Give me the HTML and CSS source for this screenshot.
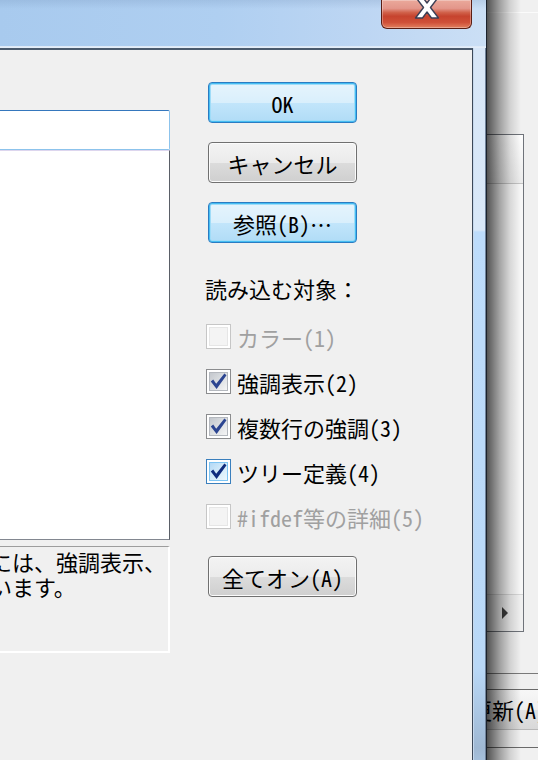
FILE: index.html
```html
<!DOCTYPE html>
<html lang="ja">
<head>
<meta charset="utf-8">
<title>読み込む対象</title>
<link rel="stylesheet" href="styles.css">
</head>
<body>
<div class="stage">
  <div class="dialog">
    <div class="titlebar">
      <div class="close">
        <svg class="close-x" width="26" height="23" viewBox="0 0 26 23">
          <path d="M1.5 1h7l4.5 6 4.5-6h7l-8 10.5 8 10.5h-7L13 16l-4.5 6h-7l8-10.5z" fill="#fff" stroke="#3b3f55" stroke-width="1.4" stroke-linejoin="round"/>
        </svg>
      </div>
    </div>
    <div class="dlg-body">
      <div class="client">
        <div class="col-left">
          <div class="edit"></div>
          <div class="listbox"></div>
          <div class="note"><div class="note-line">には、強調表示、</div><div class="note-line">います。</div></div>
        </div>
        <div class="col-right">
          <button class="btn btn-default">OK</button>
          <button class="btn">キャンセル</button>
          <button class="btn btn-default">参照(B)…</button>
          <div class="group-label">読み込む対象：</div>
          <ul class="checks">
            <li class="chk disabled"><span class="cb"><span class="cb-in"></span></span>カラー(1)</li>
            <li class="chk"><span class="cb"><span class="cb-in"><svg width="17" height="17" viewBox="0 0 17 17"><path d="M0.8 8.6L3.2 6.6L6.2 10.8L14.4 0.6L16.5 2.2L6.6 16Z" fill="#2c4591"/></svg></span></span>強調表示(2)</li>
            <li class="chk"><span class="cb"><span class="cb-in"><svg width="17" height="17" viewBox="0 0 17 17"><path d="M0.8 8.6L3.2 6.6L6.2 10.8L14.4 0.6L16.5 2.2L6.6 16Z" fill="#2c4591"/></svg></span></span>複数行の強調(3)</li>
            <li class="chk hot"><span class="cb"><span class="cb-in"><svg width="17" height="17" viewBox="0 0 17 17"><path d="M0.8 8.6L3.2 6.6L6.2 10.8L14.4 0.6L16.5 2.2L6.6 16Z" fill="#0f2c7e"/></svg></span></span>ツリー定義(4)</li>
            <li class="chk disabled"><span class="cb"><span class="cb-in"></span></span>#ifdef等の詳細(5)</li>
          </ul>
          <button class="btn btn-all">全てオン(A)</button>
        </div>
      </div>
      <div class="frame"></div>
    </div>
  </div>
  <div class="bw">
    <div class="bw-top"></div>
    <div class="bw-box">
      <div class="bw-head"></div>
      <div class="bw-arrow"><span class="tri"></span></div>
    </div>
    <div class="bw-bar"></div>
    <div class="bw-btn">更新(A)</div>
    <div class="bw-bottom"></div>
    <div class="bw-shadow"></div>
  </div>
</div>
</body>
</html>
```
FILE: styles.css
```css
html, body {
  margin: 0;
  padding: 0;
  background: #f0f0f0;
}
body {
  font-family: "Noto Sans CJK JP", "Noto Sans", sans-serif;
  font-size: 22px;
  font-feature-settings: "hwid" 1;
  color: #000;
}
.stage {
  width: 538px;
  height: 760px;
  overflow: hidden;
  display: flex;
}
.dialog {
  width: 487px;
  flex-shrink: 0;
  box-sizing: border-box;
  border-right: 1px solid #1b222c;
  display: flex;
  flex-direction: column;
}
.titlebar {
  height: 48px;
  flex-shrink: 0;
  box-sizing: border-box;
  padding-right: 14px;
  display: flex;
  justify-content: flex-end;
  background:
    linear-gradient(to bottom, rgba(110,140,180,.22) 0, rgba(110,140,180,0) 9px, rgba(0,0,0,0) 46px, #dbe8f7 46px, #e6eff9 48px),
    linear-gradient(to right, #a8caee 0%, #afcff1 45%, #bdd6f3 75%, #cbdff5 100%);
}
.close {
  width: 91px;
  height: 29px;
  box-sizing: border-box;
  border: 1px solid #5a1e14;
  border-top: none;
  border-radius: 0 0 6px 6px;
  background: linear-gradient(#eaa99b 0%, #e3968a 30%, #d06049 45%, #c6432e 58%, #cf5038 80%, #e2805f 100%);
  box-shadow: inset 0 0 0 1px rgba(255,255,255,.3);
  display: flex;
  justify-content: center;
  align-items: flex-start;
}
.close-x {
  margin-top: -4px;
}
.dlg-body {
  flex: 1;
  display: flex;
}
.client {
  width: 473px;
  flex-shrink: 0;
  box-sizing: border-box;
  border-top: 2px solid #4a5a6d;
  border-right: 1px solid #3c4858;
  display: flex;
  background: #f0f0f0;
}
.frame {
  flex: 1;
  background: linear-gradient(to bottom, #d7e6f7 0, #d9e8f8 182px, #bddcfb 184px, #b9d8f7 620px, #9fb8d3 700px, #b7d4f2 745px);
  box-shadow: inset -1px 0 #71839a, inset 1px 0 #c6d8ec;
}
.col-left {
  width: 180px;
  margin-left: -10px;
  flex-shrink: 0;
  display: flex;
  flex-direction: column;
}
.edit {
  margin-top: 60px;
  height: 40px;
  box-sizing: border-box;
  border: 1px solid #8cc3ec;
  border-top-color: #3577bd;
  border-radius: 2px;
  background: #fff;
}
.listbox {
  height: 390px;
  box-sizing: border-box;
  border: 1px solid #828790;
  border-top-color: #ddd6ee;
  border-right-color: #5a5f67;
  background: #fff;
}
.note {
  margin-top: 6px;
  height: 107px;
  box-sizing: border-box;
  border-top: 1px solid #9d9d9d;
  border-right: 2px solid #fff;
  border-bottom: 2px solid #fff;
  padding-top: 2px;
  white-space: nowrap;
}
.note-line {
  height: 25px;
  line-height: 25px;
}
.col-right {
  margin-left: 35px;
  display: flex;
  flex-direction: column;
  align-items: flex-start;
}
.btn {
  width: 149px;
  height: 41px;
  margin: 19px 0 0 3px;
  padding: 0;
  box-sizing: border-box;
  display: flex;
  align-items: center;
  justify-content: center;
  font: inherit;
  font-feature-settings: "hwid" 1;
  line-height: 1;
  color: #000;
  border: 1px solid #707070;
  border-radius: 4px;
  background: linear-gradient(#f3f3f3 0%, #ebebeb 50%, #dcdcdc 51%, #cfcfcf 100%);
  box-shadow: inset 0 0 0 1px #fbfbfb;
}
.btn:first-child {
  margin-top: 32px;
}
.btn-default {
  border-color: #2a7cc2;
  background: linear-gradient(#e6f4fc 0%, #d9effc 50%, #c2e5fb 51%, #b0dcf6 100%);
  box-shadow: inset 0 0 0 1px #45bdf2, inset 0 0 0 2px #9fdcf8;
}
.btn-all {
  margin-top: 17px;
}
.group-label {
  margin-top: 30px;
  height: 30px;
  line-height: 30px;
  font-feature-settings: normal;
}
.checks {
  list-style: none;
  margin: 11px 0 0;
  padding: 0;
}
.chk {
  height: 45px;
  display: flex;
  align-items: center;
  gap: 6px;
}
.cb {
  width: 25px;
  height: 25px;
  margin-left: 1px;
  box-sizing: border-box;
  border: 1px solid #8b8c8e;
  padding: 2px;
  background: #fff;
  display: flex;
}
.cb-in {
  flex: 1;
  box-sizing: border-box;
  border: 1px solid #b4b8be;
  background: linear-gradient(135deg, #c3c7cd 0%, #dcdfe2 50%, #f5f5f5 100%);
  display: flex;
  align-items: center;
  justify-content: center;
}
.cb-in svg {
  margin-top: -1px;
}
.chk.disabled {
  color: #a0a0a0;
}
.chk.disabled .cb {
  border-color: #c6c6c6;
}
.chk.disabled .cb-in {
  border-color: #e6e6e6;
  background: #f4f4f4;
}
.chk.hot .cb {
  border-color: #3a7fbd;
}
.chk.hot .cb-in {
  border-color: #7dc4f3;
  background: linear-gradient(135deg, #b2d8f5 0%, #d3ebfa 50%, #ecf8fe 100%);
}
.bw {
  flex: 1;
  position: relative;
  overflow: hidden;
  background: #f0f0f0;
  display: flex;
  flex-direction: column;
}
.bw-top {
  height: 12px;
  flex-shrink: 0;
  border-bottom: 1px solid #fbfbfb;
}
.bw-box {
  margin-top: 121px;
  width: 37px;
  height: 498px;
  flex-shrink: 0;
  box-sizing: border-box;
  border: 1px solid #6f737a;
  border-left: none;
  display: flex;
  flex-direction: column;
  justify-content: space-between;
  background: #f7f7f7;
}
.bw-head {
  height: 48px;
  border-bottom: 1px solid #c4c4c4;
  background: linear-gradient(#fdfdfd, #ececec);
}
.bw-arrow {
  height: 36px;
  border-top: 1px solid #d6d6d6;
  background: #f0f0f0;
  display: flex;
  align-items: center;
  justify-content: center;
}
.tri {
  width: 0;
  height: 0;
  border-top: 6px solid transparent;
  border-bottom: 6px solid transparent;
  border-left: 6px solid #3e3e3e;
}
.bw-bar {
  margin-top: 41px;
  height: 17px;
  flex-shrink: 0;
  box-sizing: border-box;
  border-top: 1px solid #7a7a7a;
  border-bottom: 1px solid #6a6a6a;
}
.bw-btn {
  height: 40px;
  flex-shrink: 0;
  box-sizing: border-box;
  margin-left: -17px;
  padding-top: 3px;
  line-height: 33px;
  white-space: nowrap;
  border-bottom: 1px solid #b8b8b8;
  background: linear-gradient(#f7f7f7 0%, #efefef 50%, #e2e2e2 51%, #d8d8d8 100%);
}
.bw-bottom {
  margin-top: 17px;
  flex: 1;
  border-top: 1px solid #6a6a6a;
}
.bw-shadow {
  position: absolute;
  inset: 0;
  pointer-events: none;
  background: linear-gradient(to right, rgba(0,0,0,.66) 0, rgba(0,0,0,.58) 3px, rgba(0,0,0,.33) 13px, rgba(0,0,0,.13) 23px, rgba(0,0,0,0) 34px);
}
```
